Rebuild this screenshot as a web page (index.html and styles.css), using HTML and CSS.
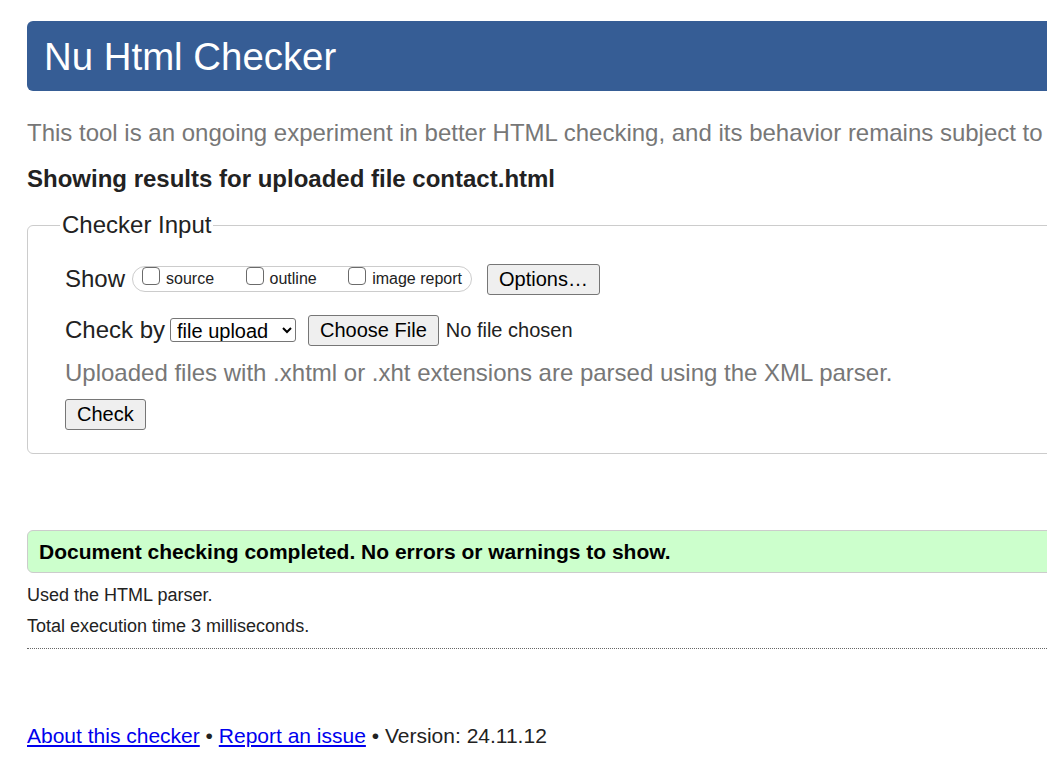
FILE: index.html
```html
<!DOCTYPE html>
<html lang="en">
<head>
  <meta charset="UTF-8">
  <title>Showing results for contact.html - Nu Html Checker</title>
  <link rel="stylesheet" href="styles.css">
</head>
<body>

  <div class="page">
    <h1>Nu Html Checker</h1>

    <p class="intro">This tool is an ongoing experiment in better HTML checking, and its behavior remains subject to change</p>

    <p class="showing">Showing results for uploaded file contact.html</p>

    <form>
      <fieldset>
        <legend>Checker Input</legend>

        <div class="row">
          <span class="label">Show</span>
          <span class="show-options">
            <label><input type="checkbox">source</label>
            <label><input type="checkbox">outline</label>
            <label><input type="checkbox">image report</label>
          </span>
          <button type="button" class="btn options">Options…</button>
        </div>

        <div class="row second">
          <span class="label">Check by</span>
          <select class="check-by">
            <option>file upload</option>
          </select>
          <span class="file">
            <button type="button" class="btn">Choose File</button>
            <span>No file chosen</span>
          </span>
        </div>

        <p class="hint">Uploaded files with .xhtml or .xht extensions are parsed using the XML parser.</p>

        <button type="button" class="btn check">Check</button>
      </fieldset>
    </form>

    <div class="success">
      <p>Document checking completed. No errors or warnings to show.</p>
    </div>

    <p class="details first">Used the HTML parser.</p>
    <p class="details">Total execution time 3 milliseconds.</p>

    <hr>

    <p class="footer">
      <a href="#">About this checker</a> • <a href="#">Report an issue</a> • Version: 24.11.12
    </p>
  </div>

</body>
</html>
```

FILE: styles.css
```css
html {
  overflow-x: hidden;
}

body {
  font-family: "Liberation Sans", Arial, sans-serif;
  color: #222;
  background: white;
  margin: 0;
  padding: 21px 0 0 27px;
}

.page {
  width: 1100px;
}

h1 {
  margin: 0;
  height: 70px;
  line-height: 72px;
  padding-left: 17px;
  background-color: #365d95;
  color: white;
  font-size: 38.4px;
  font-weight: normal;
  border-radius: 6px;
}

.intro {
  margin: 0;
  height: 28px;
  line-height: 28px;
  margin-top: 28px;
  font-size: 24px;
  color: #777;
  white-space: nowrap;
}

.showing {
  margin: 18px 0 0;
  height: 28px;
  line-height: 28px;
  font-size: 24px;
  font-weight: bold;
}

fieldset {
  margin: 18px 0 0;
  padding: 24px 37px 23px;
  border: 1px solid #ccc;
  border-radius: 6px;
}

legend {
  font-size: 24px;
  line-height: 28px;
  padding: 0 2px;
  margin-left: -5px;
}

.row {
  display: flex;
  align-items: center;
  height: 32px;
  font-size: 24px;
}

.row.second {
  margin-top: 19px;
}

.label {
  margin-right: 7px;
}

.second .label {
  margin-right: 5px;
}

.show-options {
  display: inline-block;
  box-sizing: border-box;
  height: 26px;
  line-height: 24px;
  border: 1px solid #ccc;
  border-radius: 13px;
  padding: 0 9px;
  font-size: 16px;
  color: #222;
  white-space: nowrap;
}

.show-options label {
  margin-right: 27px;
}

.show-options label:last-child {
  margin-right: 0;
}

.show-options input {
  appearance: none;
  box-sizing: border-box;
  width: 18px;
  height: 18px;
  margin: 0 6px 0 0;
  border: 1px solid #6b6b6b;
  border-radius: 4px;
  background: white;
  vertical-align: top;
}

.btn {
  font-family: inherit;
  font-size: 20px;
  line-height: 23px;
  color: black;
  background: #efefef;
  border: 1px solid #767676;
  border-radius: 3px;
  padding: 3px 11px;
}

.options {
  margin-left: 15px;
}

.check-by {
  font-family: inherit;
  font-size: 20px;
  width: 126px;
  height: 24px;
  padding: 0 2px;
  border: 1px solid #767676;
  border-radius: 3px;
  background: white;
  color: black;
}

.file {
  display: inline-flex;
  align-items: center;
  margin-left: 12px;
  font-size: 20px;
}

.file .btn {
  margin-right: 7px;
}

.hint {
  margin: 13px 0 0;
  height: 28px;
  line-height: 28px;
  font-size: 24px;
  color: #777;
}

.check {
  margin-top: 12px;
}

.success {
  margin-top: 76px;
  background: #ccffcc;
  border: 1px solid #ccc;
  border-radius: 6px;
  padding: 0 11px;
}

.success p {
  margin: 0;
  line-height: 41px;
  font-size: 21px;
  font-weight: bold;
  color: black;
}

.details {
  margin: 10px 0 0;
  height: 21px;
  line-height: 21px;
  font-size: 18px;
}

.details.first {
  margin-top: 12px;
}

hr {
  margin: 11px 0 0;
  border: 0;
  border-top: 1px dotted #666;
}

.footer {
  margin: 75px 0 0;
  line-height: 24px;
  font-size: 21px;
}

.footer a {
  color: #00e;
}
```
